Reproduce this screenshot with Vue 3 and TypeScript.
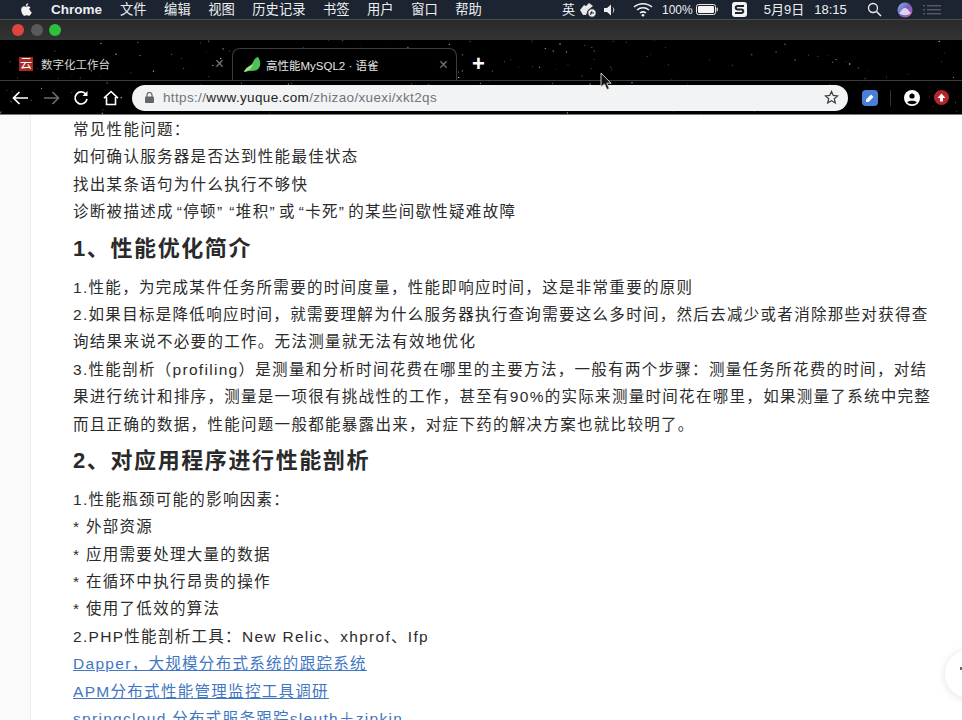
<script setup lang="ts">
import { computed } from 'vue'

const menus = ['文件', '编辑', '视图', '历史记录', '书签', '用户', '窗口', '帮助']

// star field behind the tab strip and toolbar, seeded so the picture is stable
const stars = computed(() => {
  let seed = 91
  const next = () => {
    seed = (seed * 16807) % 2147483647
    return seed / 2147483647
  }
  return Array.from({ length: 190 }, () => ({
    x: next() * 962,
    y: next() * 75,
    r: 0.3 + next() * 0.4,
    o: 0.3 + next() * 0.6,
  }))
})

type Block =
  | { kind: 'p'; text: string }
  | { kind: 'h'; text: string }
  | { kind: 'a'; text: string }

const blocks: Block[] = [
  { kind: 'p', text: '常见性能问题：' },
  { kind: 'p', text: '如何确认服务器是否达到性能最佳状态' },
  { kind: 'p', text: '找出某条语句为什么执行不够快' },
  { kind: 'p', text: '诊断被描述成“停顿”“堆积”或“卡死”的某些间歇性疑难故障' },
  { kind: 'h', text: '1、性能优化简介' },
  { kind: 'p', text: '1.性能，为完成某件任务所需要的时间度量，性能即响应时间，这是非常重要的原则' },
  { kind: 'p', text: '2.如果目标是降低响应时间，就需要理解为什么服务器执行查询需要这么多时间，然后去减少或者消除那些对获得查' },
  { kind: 'p', text: '询结果来说不必要的工作。无法测量就无法有效地优化' },
  { kind: 'p', text: '3.性能剖析（profiling）是测量和分析时间花费在哪里的主要方法，一般有两个步骤：测量任务所花费的时间，对结' },
  { kind: 'p', text: '果进行统计和排序，测量是一项很有挑战性的工作，甚至有90%的实际来测量时间花在哪里，如果测量了系统中完整' },
  { kind: 'p', text: '而且正确的数据，性能问题一般都能暴露出来，对症下药的解决方案也就比较明了。' },
  { kind: 'h', text: '2、对应用程序进行性能剖析' },
  { kind: 'p', text: '1.性能瓶颈可能的影响因素：' },
  { kind: 'p', text: '* 外部资源' },
  { kind: 'p', text: '* 应用需要处理大量的数据' },
  { kind: 'p', text: '* 在循环中执行昂贵的操作' },
  { kind: 'p', text: '* 使用了低效的算法' },
  { kind: 'p', text: '2.PHP性能剖析工具：New Relic、xhprof、Ifp' },
  { kind: 'a', text: 'Dapper，大规模分布式系统的跟踪系统' },
  { kind: 'a', text: 'APM分布式性能管理监控工具调研' },
  { kind: 'a', text: 'springcloud 分布式服务跟踪sleuth＋zipkin' },
]

// curly quotes come out of the latin font too narrow, they get their own span
const parts = (text: string) => text.split(/([“”])/).filter(Boolean)
</script>

<template>
  <div class="screen">
    <header class="menubar">
      <svg class="apple" viewBox="0 0 14 16" width="13" height="15">
        <path fill="#f2f2f2" d="M10.900 8.400c0-1.600 1.300-2.400 1.400-2.500-.8-1.100-2-1.300-2.400-1.300-1-.1-2 .6-2.500.6s-1.300-.6-2.200-.6C4.600 4.600 3.500 5.200 2.900 6.200c-1.200 2.100-.3 5.200.9 6.900.6.800 1.300 1.800 2.200 1.700.9 0 1.200-.6 2.300-.6s1.400.6 2.300.6 1.500-.8 2.100-1.700c.7-1 .9-1.900 1-2-.1 0-1.800-.7-1.800-2.700zM9.200 3.500c.5-.6.800-1.400.7-2.200-.7 0-1.500.5-2 1-.4.500-.8 1.300-.7 2.100.8.100 1.500-.4 2-.9z" />
      </svg>
      <b class="app-name">Chrome</b>
      <span v-for="m in menus" :key="m" class="menu-item">{{ m }}</span>
      <div class="status">
        <span class="ime">英</span>
        <svg width="18" height="16" viewBox="0 0 18 16">
          <path fill="#e8e8e8" d="M1 8 5 3l2 1 3-3 4 3-5 4-2 5H4z" />
          <circle cx="13" cy="11" r="4.200" fill="#f0f0f0" stroke="#1d2431" />
          <path d="M11 11h4M13 9l-1.500 4" stroke="#1d2431" />
        </svg>
        <svg class="gap-s" width="13" height="12" viewBox="0 0 13 12">
          <path fill="#eee" d="M0 4h3l4-3.500v11L3 8H0z" />
          <path d="M9 3.500c1 1.300 1 3.700 0 5" stroke="#ddd" fill="none" />
        </svg>
        <svg class="gap-m" width="20" height="15" viewBox="0 0 20 15">
          <g fill="none" stroke="#f0f0f0" stroke-width="1.500">
            <path d="M1 5c5-4.500 13-4.500 18 0" />
            <path d="M4 8c3.500-3 8.500-3 12 0" />
            <path d="M7 11c2-1.500 4-1.500 6 0" />
          </g>
          <circle cx="10" cy="13.200" r="1.300" fill="#f0f0f0" />
        </svg>
        <span class="battery-text">100%</span>
        <svg class="gap-xs" width="22" height="11" viewBox="0 0 22 11">
          <rect x=".5" y=".5" width="19" height="10" rx="2" fill="none" stroke="#e8e8e8" />
          <rect x="2" y="2" width="16" height="7" rx="1" fill="#f4f4f4" />
          <rect x="20.500" y="3.500" width="1.500" height="4" rx=".7" fill="#bbb" />
        </svg>
        <svg class="sogou" width="15" height="15" viewBox="0 0 15 15">
          <rect width="15" height="15" rx="3" fill="#f4f4f4" />
          <path d="M12 4H5.500a1.600 1.600 0 0 0 0 3.500h4a1.600 1.600 0 0 1 0 3.500H3" fill="none" stroke="#1d2431" stroke-width="2" />
        </svg>
        <span class="clock">5月9日</span>
        <span class="clock time">18:15</span>
        <svg class="gap-search" width="15" height="15" viewBox="0 0 15 15">
          <circle cx="6" cy="6" r="4.500" fill="none" stroke="#eee" stroke-width="1.300" />
          <path d="m9.500 9.500 4.500 4.500" stroke="#eee" stroke-width="1.500" />
        </svg>
        <svg class="gap-siri" width="16" height="16" viewBox="0 0 16 16">
          <defs>
            <linearGradient id="siri" x1="0" y1="0" x2="1" y2="1">
              <stop offset="0" stop-color="#7fb7e8" />
              <stop offset=".5" stop-color="#7a5fc4" />
              <stop offset="1" stop-color="#c85a9e" />
            </linearGradient>
          </defs>
          <circle cx="8" cy="8" r="7.500" fill="url(#siri)" />
          <path d="M2 11c2-1 3-5 6-5s4 4 6 5c-3 3-9 3-12 0z" fill="#e8eaf6" opacity=".85" />
        </svg>
        <svg class="gap-list" width="18" height="12" viewBox="0 0 18 12">
          <g fill="#565d68">
            <rect x="0" y="1" width="2" height="1.400" />
            <rect x="4" y="1" width="14" height="1.400" />
            <rect x="0" y="5" width="2" height="1.400" />
            <rect x="4" y="5" width="14" height="1.400" />
            <rect x="0" y="9" width="2" height="1.400" />
            <rect x="4" y="9" width="14" height="1.400" />
          </g>
        </svg>
      </div>
    </header>

    <div class="titlebar">
      <i class="light red"></i>
      <i class="light grey"></i>
      <i class="light green"></i>
    </div>

    <div class="chrome">
      <svg class="starfield" width="962" height="75" viewBox="0 0 962 75">
        <circle v-for="(s, i) in stars" :key="i" :cx="s.x" :cy="s.y" :r="s.r" fill="#fff" :opacity="s.o" />
      </svg>

      <div class="tabstrip">
        <div class="tab">
          <span class="fav-yun">云</span>
          <span class="tab-title">数字化工作台</span>
          <span class="tab-x">×</span>
        </div>
        <div class="tab active">
          <svg class="fav-leaf" width="17" height="16" viewBox="0 0 17 16">
            <path fill="#4fbf57" d="M0 15C2 10 7 10 9 5c1-2 2-4 5-5 2.500 3 3 8 1 11-1.500 2.500-5 3-8 3-2.500 0-5 .5-7 1z" />
            <path fill="#a4e08c" d="M0 15c2-5 6-6 9-8-1 4-4 7-9 8z" />
          </svg>
          <span class="tab-title">高性能MySQL2 · 语雀</span>
          <span class="tab-x">×</span>
        </div>
        <span class="new-tab">+</span>
      </div>

      <div class="toolbar">
        <svg width="17" height="14" viewBox="0 0 17 14">
          <path d="M16 7H2M7.500 1 1.500 7l6 6" fill="none" stroke="#fff" stroke-width="1.700" />
        </svg>
        <svg class="nav-fwd" width="17" height="14" viewBox="0 0 17 14">
          <path d="M1 7h14M9.500 1l6 6-6 6" fill="none" stroke="#6b6b6b" stroke-width="1.700" />
        </svg>
        <svg class="nav-reload" width="16" height="16" viewBox="0 0 16 16">
          <path d="M13 4.500A6 6 0 1 0 14 9" fill="none" stroke="#fff" stroke-width="1.700" />
          <path d="M14.500 1v5h-5z" fill="#fff" />
        </svg>
        <svg class="nav-home" width="16" height="16" viewBox="0 0 16 16">
          <path d="M1 8.200 8 1.500l7 6.700M3.500 7v7.500h9V7" fill="none" stroke="#fff" stroke-width="1.600" />
        </svg>
        <div class="omnibox">
          <svg width="9" height="11" viewBox="0 0 9 11">
            <rect x="0" y="4.500" width="9" height="6.500" rx="1" fill="#666" />
            <path d="M2 5V3a2.500 2.500 0 0 1 5 0v2" fill="none" stroke="#666" stroke-width="1.200" />
          </svg>
          <span class="url"><span class="dim">https://</span>www.yuque.com<span class="dim">/zhizao/xuexi/xkt2qs</span></span>
          <svg class="star" width="15" height="15" viewBox="0 0 15 15">
            <path d="m7.500 1.500 1.800 4 4.300.4-3.300 2.900 1 4.200-3.800-2.200-3.800 2.200 1-4.200L1.400 5.900l4.300-.4z" fill="none" stroke="#444" stroke-width="1.300" />
          </svg>
        </div>
        <span class="ext-blue">
          <svg width="10" height="10" viewBox="0 0 10 10"><path d="M1 9V6.500L6 1.500 8.500 4l-5 5z" fill="#fff" /></svg>
        </span>
        <i class="tool-sep"></i>
        <svg class="avatar" width="16" height="16" viewBox="0 0 16 16">
          <circle cx="8" cy="8" r="8" fill="#fff" />
          <circle cx="8" cy="6" r="2.600" fill="#000" />
          <path d="M3.200 12.500c1-2.200 8.600-2.200 9.600 0-2.500 2.200-7 2.200-9.600 0z" fill="#000" />
        </svg>
        <span class="ext-red">
          <svg width="9" height="9" viewBox="0 0 9 9"><path d="M4.500.5 8.500 5H6v3.500H3V5H.5z" fill="#fff" /></svg>
        </span>
      </div>
    </div>

    <main class="page">
      <aside class="rail"></aside>
      <article class="doc">
        <template v-for="(b, i) in blocks" :key="i">
          <h2 v-if="b.kind === 'h'" class="doc-h">{{ b.text }}</h2>
          <a v-else-if="b.kind === 'a'" class="doc-line doc-link">{{ b.text }}</a>
          <p v-else class="doc-line">
            <template v-for="(t, j) in parts(b.text)" :key="j">
              <span v-if="t === '“'" class="quote-open">{{ t }}</span>
              <span v-else-if="t === '”'" class="quote-close">{{ t }}</span>
              <template v-else>{{ t }}</template>
            </template>
          </p>
        </template>
      </article>
    </main>

    <div class="float-btn"><i></i></div>

    <svg class="cursor" width="13" height="19" viewBox="0 0 13 19">
      <path d="M1 1v14l3.500-3 2.500 5.500 2.300-1-2.500-5.300H11z" fill="#111" stroke="#ddd" stroke-width=".9" />
    </svg>
  </div>
</template>

<style scoped>
.screen {
  position: relative;
  width: 962px;
  height: 720px;
  overflow: hidden;
  display: flex;
  flex-direction: column;
  background: #fff;
  font-family: "Liberation Sans", "Noto Sans CJK SC", sans-serif;
}

.menubar {
  height: 19px;
  flex: none;
  display: flex;
  align-items: center;
  padding-left: 19px;
  background: #1d2431;
  color: #eceef0;
  font-size: 13.300px;
  line-height: 18px;
  border-bottom: 1px solid #4a4d52;
}
.apple { margin-right: 19px; }
.app-name {
  font-size: 13.500px;
  margin-right: 18px;
}
.menu-item { margin-right: 17.500px; }

.status {
  position: absolute;
  top: 0;
  left: 562px;
  height: 19px;
  display: flex;
  align-items: center;
}
.ime { font-size: 13px; margin-right: 4px; }
.gap-s { margin-left: 7px; }
.gap-m { margin-left: 16px; }
.gap-xs { margin-left: 3px; }
.gap-search { margin-left: 20px; }
.gap-siri { margin-left: 15px; }
.gap-list { margin-left: 10px; }
.battery-text {
  margin-left: 9px;
  font-size: 12px;
}
.sogou { margin-left: 14px; }
.clock { margin-left: 17px; font-size: 13px; }
.clock.time { margin-left: 10px; }

.titlebar {
  height: 20px;
  flex: none;
  display: flex;
  align-items: center;
  gap: 6.500px;
  padding-left: 12px;
  background: linear-gradient(#2a2a2a, #333);
}
.light {
  width: 12px;
  height: 12px;
  border-radius: 50%;
}
.red { background: #e0443e; }
.grey { background: #5a5a5a; }
.green { background: #2ac13f; }

.chrome {
  position: relative;
  height: 75px;
  flex: none;
  box-sizing: border-box;
  background: #000;
  border-bottom: 1px solid #777;
}
.starfield {
  position: absolute;
  left: 0;
  top: 0;
}

.tabstrip {
  position: relative;
  height: 41px;
  display: flex;
  align-items: flex-end;
  padding-left: 8px;
  border-bottom: 1px solid #3c3c3c;
  box-sizing: border-box;
}
.tab {
  width: 224px;
  height: 32px;
  display: flex;
  align-items: center;
  padding: 0 8px 0 11px;
  box-sizing: border-box;
  color: #d8d8d8;
  font-size: 11.500px;
}
.tab.active {
  color: #e6e6e6;
  width: 225px;
  padding-left: 11px;
  border: 1px solid #3c3c3c;
  border-bottom: 0;
  border-radius: 8px 8px 0 0;
  background: #000;
}
.fav-yun {
  width: 14px;
  height: 14px;
  margin-right: 8px;
  background: #a82a24;
  color: #fff;
  font-size: 12px;
  line-height: 14px;
  text-align: center;
}
.fav-leaf { margin-right: 5px; }
.tab-title {
  flex: 1;
  white-space: nowrap;
}
.tab-x {
  color: #777;
  font-size: 16px;
  line-height: 1;
}
.new-tab {
  margin: 0 0 5px 15px;
  color: #fff;
  font-size: 22px;
  font-weight: 700;
  line-height: 1;
}

.toolbar {
  position: relative;
  height: 33px;
  display: flex;
  align-items: center;
  padding-left: 12px;
}
.nav-fwd { margin-left: 14px; }
.nav-reload { margin-left: 13px; }
.nav-home { margin-left: 14px; }
.omnibox {
  width: 716px;
  height: 26px;
  margin-left: 13px;
  flex: none;
  display: flex;
  align-items: center;
  box-sizing: border-box;
  padding: 0 9px 0 13px;
  border-radius: 13px;
  background: #f1f3f4;
}
.url {
  flex: 1;
  margin-left: 9px;
  color: #222;
  font-size: 13.500px;
  letter-spacing: .35px;
}
.dim { color: #70757a; }
.ext-blue {
  width: 16px;
  height: 16px;
  margin-left: 14px;
  display: flex;
  align-items: center;
  justify-content: center;
  border-radius: 4px;
  background: #4a7fd8;
}
.tool-sep {
  width: 1px;
  height: 16px;
  margin-left: 12px;
  background: #333;
}
.avatar { margin-left: 13px; }
.ext-red {
  width: 15px;
  height: 15px;
  margin-left: 14px;
  display: flex;
  align-items: center;
  justify-content: center;
  border-radius: 50%;
  background: #b3262b;
}

.page {
  flex: 1;
  display: flex;
  min-height: 0;
}
.rail {
  width: 30px;
  flex: none;
  background: #fafafa;
  border-right: 1px solid #eee;
}
.doc {
  padding: 1px 0 0 42px;
  color: #2b2b2b;
  font-size: 15.500px;
  letter-spacing: 1.300px;
  white-space: nowrap;
}
.doc-line {
  display: block;
  margin: 0;
  height: 27.400px;
  line-height: 27.400px;
}
.quote-open { margin-left: 3px; }
.quote-close { letter-spacing: 4.300px; }
.doc-link {
  color: #3f77c2;
  text-decoration: underline;
}
.doc-h {
  margin: 8.500px 0 9.500px;
  height: 30px;
  line-height: 30px;
  font-size: 22px;
  font-weight: 700;
  letter-spacing: 1.600px;
  color: #2a2a2a;
}

.float-btn {
  position: absolute;
  left: 945px;
  top: 650px;
  width: 48px;
  height: 48px;
  border-radius: 50%;
  background: #fff;
  box-shadow: 0 1px 8px rgba(0, 0, 0, .12);
}
.float-btn i {
  position: absolute;
  left: 15px;
  top: 17px;
  width: 3px;
  height: 3px;
  background: #666;
}
.cursor {
  position: absolute;
  left: 600px;
  top: 72px;
}
</style>
